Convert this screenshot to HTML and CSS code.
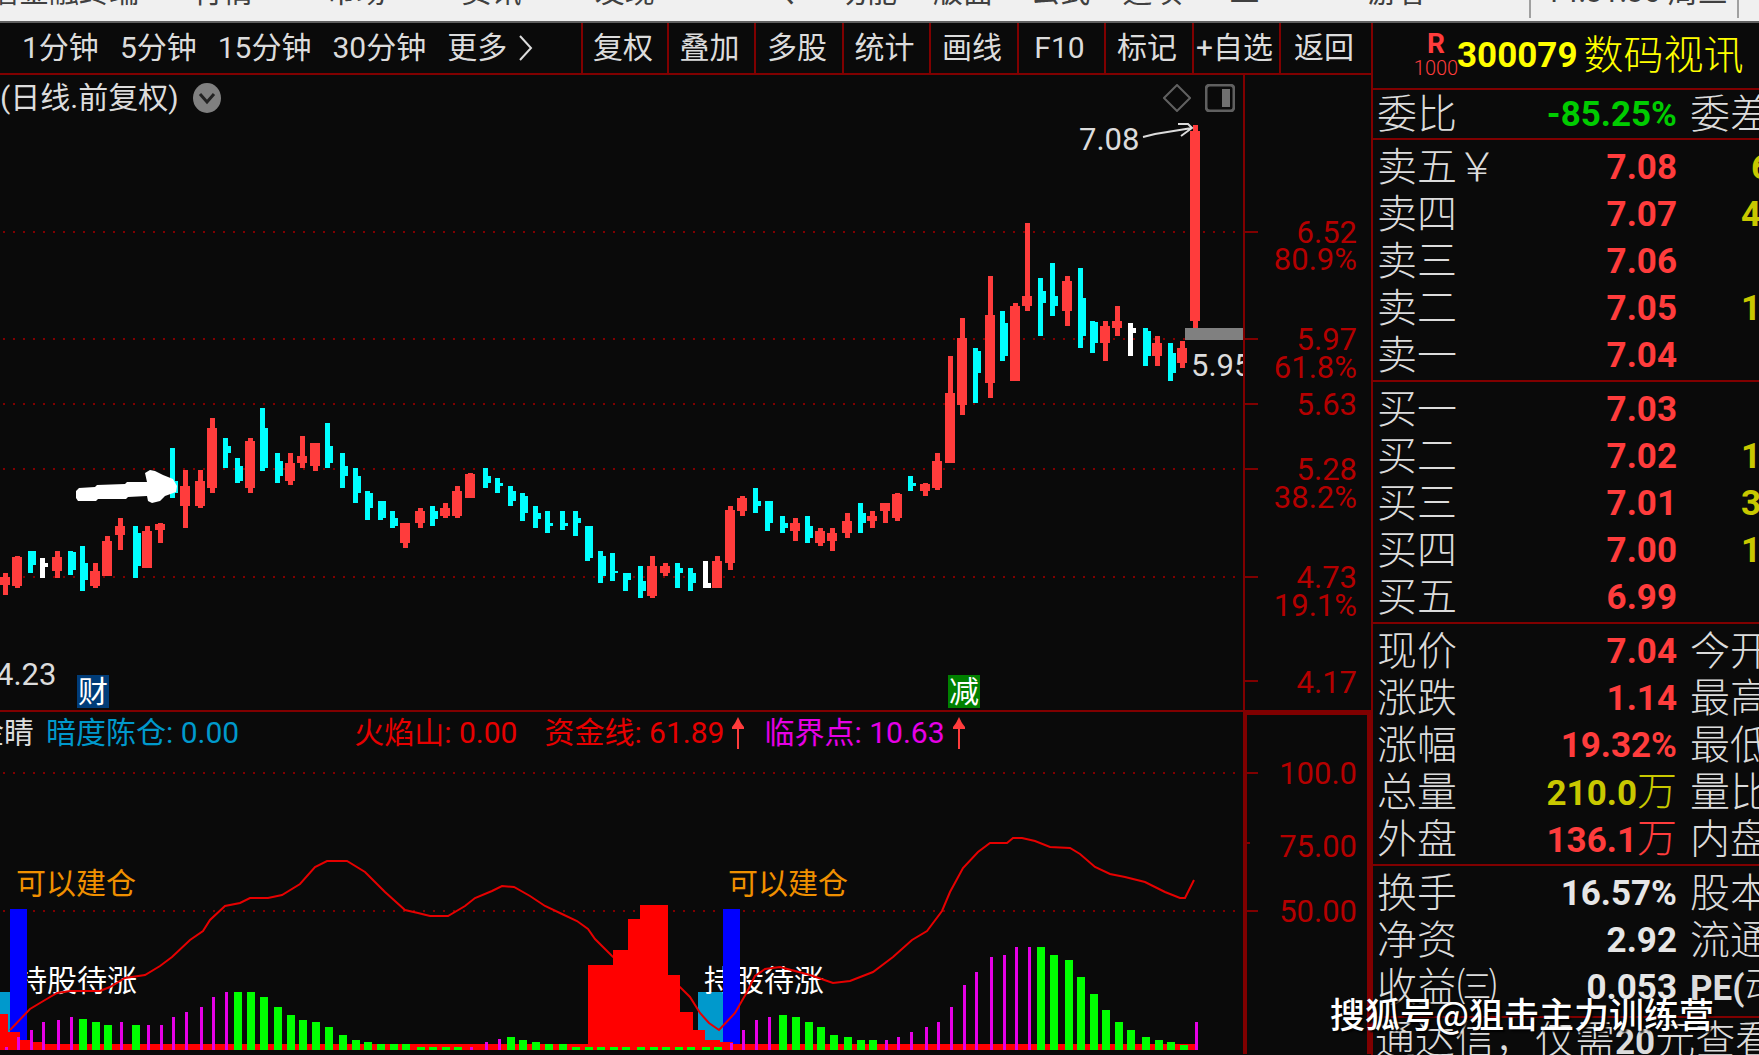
FILE: index.html
```html
<!DOCTYPE html>
<html lang="zh-CN">
<head>
<meta charset="utf-8">
<title>数码视讯 300079</title>
<link rel="stylesheet" href="styles.css">
</head>
<body>
<nav class="menubar">
  <a class="brand" href="#">信金融终端</a>
  <a href="#">行情</a>
  <a href="#">市场</a>
  <a href="#">资讯</a>
  <a href="#">发现</a>
  <span>、</span>
  <a href="#">功能</a>
  <a href="#">版面</a>
  <a href="#">公式</a>
  <a href="#">选项</a>
  <span>二</span>
  <a href="#">游客</a>
  <span class="clock">14:31:36 周三</span>
  <span class="edge"></span>
</nav>

<div class="workspace">
  <main class="charts">
    <div class="toolbar">
      <div class="periods">
        <button>1分钟</button>
        <button>5分钟</button>
        <button>15分钟</button>
        <button>30分钟</button>
        <button class="more">更多<svg width="14" height="28" viewBox="0 0 14 28"><path d="M1 2L12 14L1 26" /></svg></button>
      </div>
      <div class="tools">
        <button>复权</button>
        <button>叠加</button>
        <button>多股</button>
        <button>统计</button>
        <button>画线</button>
        <button>F10</button>
        <button>标记</button>
        <button>+自选</button>
        <button>返回</button>
      </div>
    </div>

    <section class="pane price">
      <div class="plot">
        <div class="pane-head">
          <span>(日线.前复权)</span>
          <button class="icon" aria-label="展开"><svg width="28" height="30" viewBox="0 0 28 30"><ellipse cx="14" cy="15" rx="14" ry="15" fill="#808080"/><path d="M7 11L14 19L21 11" fill="none" stroke="#222" stroke-width="3"/></svg></button>
          <span class="spacer"></span>
          <button class="icon" aria-label="标注"><svg width="28" height="28" viewBox="0 0 28 28"><path d="M14 1L27 14L14 27L1 14Z" fill="none" stroke="#606060" stroke-width="2"/></svg></button>
          <button class="icon" aria-label="侧栏"><svg width="30" height="28" viewBox="0 0 30 28"><rect x="1" y="1" width="28" height="26" rx="4" fill="none" stroke="#606060" stroke-width="3"/><rect x="17" y="5" width="8" height="18" fill="#707070"/></svg></button>
        </div>
        <svg class="canvas" viewBox="0 117 1243 594">
          <g class="grid">
            <path d="M3 232H1243M3 339H1243M3 404H1243M3 469H1243M3 577H1243"/>
          </g>
          <g id="candles"></g>
          <rect x="1185" y="328" width="58" height="12" fill="#808080"/>
          <text x="1079" y="150">7.08</text>
          <text x="1191" y="376">5.95</text>
          <text x="-4" y="685">4.23</text>
          <path class="pointer" d="M1143 137L1155 134L1192 128M1178 124H1188L1192 128L1181 136"/>
          <path class="hand" d="M76 491L79 488L95 487L97 485L125 484L127 482L147 482L145 473L150 470L155 471L163 475L173 479L177 486L176 492L165 496L160 501L152 503L148 501L147 496L128 497L126 499L98 499L96 501L78 501L76 498Z"/>
          <rect x="77" y="675" width="32" height="33" fill="#003c78"/>
          <text x="78" y="702" class="tag">财</text>
          <rect x="948" y="675" width="32" height="33" fill="#008000"/>
          <text x="949" y="702" class="tag">减</text>
        </svg>
      </div>
      <svg class="axis" viewBox="1245 75 126 636">
        <path d="M1245 232H1258M1245 339H1258M1245 404H1258M1245 469H1258M1245 577H1258M1245 681H1258"/>
        <text x="1357" y="243">6.52</text>
        <text x="1357" y="270">80.9%</text>
        <text x="1357" y="350">5.97</text>
        <text x="1357" y="378">61.8%</text>
        <text x="1357" y="415">5.63</text>
        <text x="1357" y="480">5.28</text>
        <text x="1357" y="508">38.2%</text>
        <text x="1357" y="588">4.73</text>
        <text x="1357" y="616">19.1%</text>
        <text x="1357" y="693">4.17</text>
      </svg>
    </section>

    <section class="pane indicator">
      <div class="plot">
        <div class="pane-head legend">
          <span class="name">金睛</span>
          <span class="dark">暗度陈仓: 0.00</span>
          <span class="fire">火焰山: 0.00</span>
          <span class="fund">资金线: 61.89<svg width="14" height="34" viewBox="0 0 14 34"><path d="M7 1L10 7L13 11V13H8V33H6V13H1V11L4 7Z"/></svg></span>
          <span class="crit">临界点: 10.63<svg width="14" height="34" viewBox="0 0 14 34"><path d="M7 1L10 7L13 11V13H8V33H6V13H1V11L4 7Z"/></svg></span>
        </div>
        <svg class="canvas" viewBox="0 755 1243 300">
          <g class="grid"><path d="M3 774H1243M3 912H1243"/></g>
          <text x="16" y="895" class="build">可以建仓</text>
          <text x="728" y="895" class="build">可以建仓</text>
          <path fill="#0099cc" d="M0 993H10V1046H0ZM698 993H723V1046H698Z"/>
          <text x="17" y="992" class="hold">持股待涨</text>
          <text x="704" y="992" class="hold">持股待涨</text>
          <path fill="#0000ff" d="M10 910H27V1046H10ZM723 910H740V1046H723Z"/>
          <path class="line" d="M10 1031L30 1010L45 1001L57 994L70 992H100L110 988L125 979L145 976L160 967L172 958L190 941L203 932L210 921L225 907L240 904L250 899H268L282 896L300 885L315 868L327 862H347L365 873L385 893L405 911L418 914L430 917H448L465 907L475 899L492 892L502 887L514 888L530 897L545 907L562 915L577 922L588 930L595 940L613 958L680 988L690 998L700 1014L709 1024L719 1031L735 1014L747 993L755 977L765 970L780 968L795 972L810 976L833 984L850 982L873 973L893 958L912 941L927 932L942 912L950 893L963 869L978 853L990 844H1007L1013 839H1022L1035 842L1050 848L1070 849L1080 855L1095 868L1110 875L1125 878L1145 883L1165 893L1180 899H1185L1194 881"/>
          <path fill="#ff0000" d="M0 1051V1015H8V1033H20V1041H30V1043H43V1045H588V966H613V951H628V920H640V906H668V976H680V1013H693V1031H705V1041H720V1043H733V1045H1196V1051Z"/>
          <g id="volume"></g>
        </svg>
      </div>
      <svg class="axis" viewBox="1247 716 120 339">
        <path d="M1247 774H1258M1247 844H1250M1247 912H1258"/>
        <text x="1357" y="785">100.0</text>
        <text x="1357" y="858">75.00</text>
        <text x="1357" y="923">50.00</text>
      </svg>
    </section>
  </main>

  <aside class="quote">
    <header>
      <span class="badge"><b>R</b><i>1000</i></span>
      <b class="code">300079</b>
      <span class="stock">数码视讯</span>
    </header>
    <table>
      <tbody class="single">
        <tr><th>委比</th><td class="down">-85.25%</td><td class="next">委差</td></tr>
      </tbody>
      <tbody>
        <tr><th>卖五￥</th><td>7.08</td><td class="qty short">6</td></tr>
        <tr><th>卖四</th><td>7.07</td><td class="qty">4</td></tr>
        <tr><th>卖三</th><td>7.06</td><td class="qty"></td></tr>
        <tr><th>卖二</th><td>7.05</td><td class="qty">1</td></tr>
        <tr><th>卖一</th><td>7.04</td><td class="qty"></td></tr>
      </tbody>
      <tbody>
        <tr><th>买一</th><td>7.03</td><td class="qty"></td></tr>
        <tr><th>买二</th><td>7.02</td><td class="qty">1</td></tr>
        <tr><th>买三</th><td>7.01</td><td class="qty">3</td></tr>
        <tr><th>买四</th><td>7.00</td><td class="qty">1</td></tr>
        <tr><th>买五</th><td>6.99</td><td class="qty"></td></tr>
      </tbody>
      <tbody>
        <tr><th>现价</th><td>7.04</td><td class="next">今开</td></tr>
        <tr><th>涨跌</th><td>1.14</td><td class="next">最高</td></tr>
        <tr><th>涨幅</th><td>19.32%</td><td class="next">最低</td></tr>
        <tr><th>总量</th><td class="vol">210.0<span>万</span></td><td class="next">量比</td></tr>
        <tr><th>外盘</th><td>136.1<span>万</span></td><td class="next">内盘</td></tr>
      </tbody>
      <tbody class="basics">
        <tr><th>换手</th><td class="flat">16.57%</td><td class="next">股本</td></tr>
        <tr><th>净资</th><td class="flat">2.92</td><td class="next">流通</td></tr>
        <tr><th>收益㈢</th><td class="flat">0.053</td><td class="next"><b>PE(</b>动)</td></tr>
      </tbody>
    </table>
    <p class="promo">通达信，仅需<b>20</b>元查看</p>
  </aside>
</div>
<div class="watermark">搜狐号@狙击主力训练营</div>
<script src="chart.js"></script>
</body>
</html>
```

FILE: styles.css
```css
* { box-sizing: border-box; }

body {
  margin: 0;
  height: 100vh;
  display: flex;
  flex-direction: column;
  overflow: hidden;
  position: relative;
  background: #0a0a0a;
  color: #dcdcdc;
  font-family: Roboto, "Noto Sans CJK SC", sans-serif;
  font-size: 30px;
  line-height: 32px;
  white-space: nowrap;
}

button {
  padding: 0;
  border: 0;
  background: none;
  color: inherit;
  font: inherit;
  cursor: pointer;
}

/* menu bar */
.menubar {
  flex: none;
  height: 23px;
  display: grid;
  grid-template-columns: 193fr 133fr 135fr 133fr 188fr 54fr 96fr 97fr 92fr 107fr 138fr 161fr 208fr 22fr;
  grid-template-rows: 8px;
  align-items: end;
  background: #f0f0f0;
  border-bottom: 2px solid #606060;
  color: #404040;
}
.menubar a { color: inherit; text-decoration: none; }
.menubar .brand { margin-left: -11px; }
.menubar .clock, .menubar .edge {
  height: 42px;
  margin-bottom: -10px;
  padding-left: 14px;
  border-left: 2px solid #a0a0a0;
}

.workspace {
  flex: 1;
  min-height: 0;
  display: grid;
  grid-template-columns: minmax(0, 1fr) 388px;
}

/* charts */
.charts {
  display: grid;
  grid-template-rows: 52px 637fr 343fr;
  min-height: 0;
}
.toolbar {
  display: flex;
  border-bottom: 2px solid #800000;
}
.periods {
  flex: 1;
  display: flex;
  align-items: center;
  gap: 21px;
  padding-left: 22px;
}
.more { display: flex; align-items: center; gap: 12px; }
.more path { fill: none; stroke: #dcdcdc; stroke-width: 2; }
.tools {
  flex: none;
  width: 790px;
  display: grid;
  grid-template-columns: 86fr 87fr 88fr 87fr 88fr 87fr 88fr 87fr 92fr;
}
.tools button { padding-right: 4px; border-left: 2px solid #800000; }

.pane {
  display: grid;
  grid-template-columns: minmax(0, 1fr) 128px;
  min-height: 0;
  overflow: hidden;
}
.price { border-bottom: 2px solid #800000; }
.plot { display: flex; flex-direction: column; min-width: 0; }
.canvas { display: block; width: 100%; }
.axis { display: block; width: 100%; border-left: 2px solid #800000; }
.indicator .axis { border: 4px solid #800000; border-bottom: 0; border-top-width: 3px; }

.pane-head {
  flex: none;
  height: 42px;
  display: flex;
  align-items: center;
  gap: 14px;
  padding: 4px 8px 0 0;
}
.pane-head .spacer { flex: 1; }
.icon { display: flex; }

.legend { gap: 0; padding-top: 0; overflow: hidden; }
.legend span { display: flex; align-items: center; white-space: pre; }
.legend svg { margin-left: 7px; fill: #ff3c3c; }
.name { margin-left: -26px; }
.dark { margin-left: 12px; color: #0099cc; }
.fire { margin-left: 115px; color: #e60000; }
.fund { margin-left: 27px; color: #e60000; }
.crit { margin-left: 19px; color: #e600e6; }

.grid path { fill: none; stroke: #800000; stroke-width: 2; stroke-dasharray: 2 8; }
.canvas text { fill: #dcdcdc; font-size: 31px; }
.canvas .tag { fill: #fff; font-size: 30px; }
.canvas .build { fill: #f09000; font-size: 30px; }
.canvas .hold { fill: #fff; font-size: 30px; }
.pointer { fill: none; stroke: #dcdcdc; stroke-width: 2; }
.hand { fill: #fff; }
.line { fill: none; stroke: #e60000; stroke-width: 2; }
.axis text { fill: #b40000; font-size: 31px; text-anchor: end; }
.axis path { stroke: #800000; stroke-width: 2; }
.up { fill: #ff3c3c; }
.fall { fill: #00ffff; }
.even { fill: #ffffff; }
.thin { fill: #e600e6; }
.wide { fill: #00ff00; }

/* quote panel */
.quote {
  min-width: 0;
  overflow: hidden;
  border-left: 2px solid #800000;
  font-size: 40px;
  line-height: 40px;
  font-weight: 300;
}
.quote header {
  height: 67px;
  display: flex;
  align-items: center;
  padding-left: 42px;
  border-bottom: 2px solid #800000;
  color: #ffff00;
}
.badge {
  width: 42px;
  display: flex;
  flex-direction: column;
  align-items: center;
  color: #ff3c3c;
  font-size: 28px;
  line-height: 24px;
}
.badge i { font-style: normal; font-size: 20px; }
.code { font-size: 35px; }
.stock { margin-left: 6px; }
.quote b, .quote td { font-weight: 700; font-size: 35px; }
.quote .badge b { font-size: 28px; }

table { width: 100%; table-layout: fixed; border-collapse: separate; border-spacing: 0; }
th, td { height: 47px; padding: 0; overflow: hidden; }
th { width: 155px; padding-left: 4px; text-align: left; font-weight: 300; }
td { width: 149px; text-align: right; color: #ff3c3c; }
td span { font-size: 40px; font-weight: 300; }
.quote td.next { width: auto; padding-left: 13px; text-align: left; color: #dcdcdc; font-size: 40px; font-weight: 300; }
.quote td.qty { width: auto; padding-left: 64px; text-align: left; color: #c8c800; }
.quote td.short { padding-left: 74px; }
td.down { color: #00cc00; }
td.vol { color: #c8c800; }
td.flat { color: #e6e6e6; }
tbody tr:first-child > * { height: 51px; padding-top: 4px; }
tbody tr:last-child > * { height: 50px; padding-bottom: 1px; border-bottom: 2px solid #800000; }
.single tr:first-child > * { height: 50px; padding-top: 2px; padding-bottom: 0; }
.basics tr:last-child > * { height: 54px; padding-bottom: 5px; }
.promo { margin: 3px 0 0 2px; }

.watermark {
  position: absolute;
  right: 45px;
  bottom: 19px;
  color: #fff;
  font: 500 35px/46px "Noto Sans CJK SC", sans-serif;
  text-shadow: 2px 2px 2px #000;
}
```

FILE: chart.js
```js
// kind, centre x, wick top, wick bottom, body top, body bottom
const candles = `
u 5 573 595 577 585|u 17 556 588 557 586|d 30 551 573 551 565|e 42 558 578 563 567|u 57 551 578 557 571
d 70 551 575 552 570|d 82 546 591 563 580|u 95 563 588 571 586|u 107 536 576 541 576|u 120 518 550 526 535
d 135 526 578 533 566|u 147 526 568 531 568|u 160 523 543 524 530|d 172 448 498 481 493|u 185 470 528 486 506
u 200 470 508 481 506|u 212 418 493 428 488|d 225 438 468 446 453|d 237 458 483 466 481|u 250 438 493 441 488
d 262 408 471 428 468|d 277 453 483 461 476|u 290 453 485 463 481|u 302 436 468 456 463|u 315 443 471 443 466
d 327 423 468 446 463|d 342 453 488 466 476|d 355 468 503 476 493|d 367 491 520 493 508|d 380 501 520 501 518
d 392 511 528 518 526|u 405 523 548 523 543|u 420 508 528 511 523|d 432 506 526 511 519|u 445 503 518 508 516
u 457 486 518 491 516|u 470 473 498 474 498|d 485 468 488 476 483|d 497 478 493 483 486|d 510 486 506 491 501
d 522 493 521 496 513|d 535 506 528 513 519|d 547 511 533 523 526|d 562 511 530 523 526|d 575 511 536 518 523
d 587 526 561 526 558|d 600 551 583 556 576|d 612 553 581 571 573|d 625 573 591 573 580|d 640 566 598 581 591
u 652 556 598 566 596|u 665 563 576 566 573|d 677 563 588 568 573|d 690 568 591 573 583|e 705 561 588 583 588
u 717 556 588 561 588|u 730 506 570 510 563|u 742 496 516 498 511|d 755 488 513 501 506|d 767 501 531 501 523
d 782 516 533 523 528|u 795 518 541 523 531|d 807 516 543 526 538|u 820 528 546 531 543|u 832 528 551 533 541
u 847 513 538 521 533|d 860 503 533 513 523|u 872 511 528 516 521|u 885 503 523 503 511|u 897 493 521 494 518
d 910 476 491 483 486|u 925 483 496 484 491|u 937 453 490 461 488|u 950 356 463 393 463|u 962 318 415 338 405
d 975 348 403 351 373|u 990 276 398 315 383|d 1002 311 361 323 356|u 1015 303 381 306 381|u 1027 223 311 296 306
d 1040 278 336 291 303|d 1052 263 316 296 306|u 1067 276 326 281 311|d 1080 268 348 298 336|d 1092 321 353 322 343
u 1105 321 361 326 343|u 1117 306 336 321 328|e 1130 323 356 328 333|d 1145 328 366 331 356|u 1157 336 366 343 356
d 1170 343 381 353 373|u 1182 341 368 348 363|u 1195 125 328 131 321`;

// kind, centre x, top
const volume = `
m 6 1048|m 18 1038|m 31 1031|m 43 1023|m 58 1021|m 71 1018|g 83 1020|g 96 1023|g 108 1026|m 121 1023
g 136 1026|m 148 1026|m 161 1026|m 173 1018|m 186 1013|m 201 1008|m 213 998|m 226 993|g 238 993|g 251 993
g 264 998|g 278 1008|g 291 1016|g 303 1021|g 316 1023|g 329 1028|g 343 1036|g 356 1041|g 368 1043|g 381 1045
g 394 1045|g 406 1045|g 421 1048|g 433 1048|g 446 1048|g 458 1048|m 471 1048|m 486 1043|m 499 1040|g 511 1038
g 523 1041|g 536 1043|g 549 1045|g 563 1045|g 576 1048|g 589 1048|g 601 1048|g 614 1048|g 626 1048|g 641 1048
g 654 1048|g 666 1048|g 679 1048|g 691 1048|g 706 1048|g 718 1048|m 731 1044|m 743 1031|m 756 1021|m 769 1018
g 783 1016|g 796 1018|g 809 1023|g 821 1028|g 834 1036|g 848 1038|g 861 1041|g 873 1041|m 886 1041|m 898 1038
m 911 1033|m 926 1028|m 938 1023|m 951 1008|m 964 986|m 976 973|m 991 958|m 1004 956|m 1016 948|m 1029 948
g 1041 948|g 1054 956|g 1069 961|g 1081 978|g 1094 995|g 1106 1011|g 1119 1023|g 1131 1031|g 1146 1038|g 1159 1041
g 1171 1043|g 1184 1046|m 1196 1023`;

const rows = text => text.trim().split(/[|\n]/).map(row => {
  const [kind, ...values] = row.split(' ');
  return [kind, ...values.map(Number)];
});

function rect(parent, name, x, y, width, height) {
  const node = document.createElementNS('http://www.w3.org/2000/svg', 'rect');
  for (const [key, value] of Object.entries({ class: name, x, y, width, height })) node.setAttribute(key, value);
  parent.append(node);
}

const candleLayer = document.getElementById('candles');
const names = { u: 'up', d: 'fall', e: 'even' };
for (const [kind, x, top, bottom, open, close] of rows(candles)) {
  rect(candleLayer, names[kind], x - 2, top, 5, bottom - top);
  if (kind === 'u') rect(candleLayer, names[kind], x - 5, open, 10, close - open);
  else rect(candleLayer, names[kind], x - 2, open, 8, close - open);
}

const volumeLayer = document.getElementById('volume');
for (const [kind, x, top] of rows(volume)) {
  if (kind === 'g') rect(volumeLayer, 'wide', x - 4, top, 8, 1051 - top);
  else rect(volumeLayer, 'thin', x - 1, top, 3, 1051 - top);
}
```
